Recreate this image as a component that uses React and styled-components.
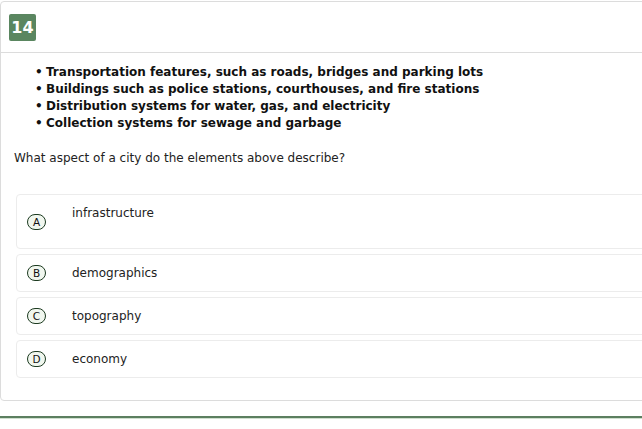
import React from "react";
import styled, { createGlobalStyle } from "styled-components";

const GlobalStyle = createGlobalStyle`
  html, body {
    margin: 0;
    padding: 0;
    overflow: hidden;
    background: #fff;
  }
  body {
    font-family: "DejaVu Sans", Verdana, sans-serif;
    color: #222;
  }
`;

const Page = styled.div`
  width: 642px;
  height: 429px;
  overflow: hidden;
  padding-top: 1px;
  box-sizing: border-box;
`;

const Card = styled.div`
  width: 680px;
  border: 1px solid #dcdcdc;
  border-radius: 4px;
  background: #fff;
  box-sizing: border-box;
`;

const Header = styled.div`
  display: flex;
  align-items: center;
  padding: 12px 8px 11px;
  border-bottom: 1px solid #dcdcdc;
`;

const Badge = styled.div`
  width: 27px;
  height: 27px;
  border-radius: 2px;
  background: #5a8660;
  color: #fff;
  font-weight: bold;
  font-size: 16px;
  display: flex;
  align-items: center;
  justify-content: center;
`;

const Body = styled.div`
  padding: 11px 0 22px 13px;
`;

const Bullets = styled.ul`
  margin: 0 0 18px 21px;
  padding: 0;
  list-style: none;
`;

const Bullet = styled.li`
  font-size: 12px;
  font-weight: bold;
  line-height: 17px;
  color: #111;
  &::before {
    content: "•";
    display: inline-block;
    width: 11px;
  }
`;

const Question = styled.p`
  margin: 0 0 27px;
  font-size: 12px;
  line-height: 17px;
  color: #222;
`;

const Options = styled.div`
  display: flex;
  flex-direction: column;
  gap: 5px;
  padding-left: 2px;
`;

const Option = styled.div`
  display: flex;
  align-items: center;
  border: 1px solid #ececec;
  border-radius: 4px;
  min-height: ${(p) => (p.$tall ? "55px" : "38px")};
  box-sizing: border-box;
  padding-left: 10px;
`;

const Letter = styled.span`
  width: 17px;
  height: 14px;
  border: 1px solid #1c3a20;
  border-radius: 8px;
  background: #f1f7ef;
  font-size: 10.5px;
  line-height: 14px;
  text-align: center;
  color: #111;
  flex-shrink: 0;
`;

const Label = styled.div`
  margin-left: 26px;
  font-size: 12px;
  line-height: 15px;
  color: #222;
  align-self: ${(p) => (p.$top ? "flex-start" : "center")};
  padding-top: ${(p) => (p.$top ? "11px" : "0")};
`;

const BottomRule = styled.div`
  margin-top: 15px;
  height: 2px;
  border-bottom: 1px solid #cfe0cf;
  background: #5c7f60;
`;

const bullets = [
  "Transportation features, such as roads, bridges and parking lots",
  "Buildings such as police stations, courthouses, and fire stations",
  "Distribution systems for water, gas, and electricity",
  "Collection systems for sewage and garbage",
];

const answers = [
  { key: "A", text: "infrastructure" },
  { key: "B", text: "demographics" },
  { key: "C", text: "topography" },
  { key: "D", text: "economy" },
];

export default function App() {
  return (
    <Page>
      <GlobalStyle />
      <Card>
        <Header>
          <Badge>14</Badge>
        </Header>
        <Body>
          <Bullets>
            {bullets.map((b) => (
              <Bullet key={b}>{b}</Bullet>
            ))}
          </Bullets>
          <Question>What aspect of a city do the elements above describe?</Question>
          <Options>
            {answers.map((a, i) => (
              <Option key={a.key} $tall={i === 0}>
                <Letter>{a.key}</Letter>
                <Label $top={i === 0}>{a.text}</Label>
              </Option>
            ))}
          </Options>
        </Body>
      </Card>
      <BottomRule />
    </Page>
  );
}
